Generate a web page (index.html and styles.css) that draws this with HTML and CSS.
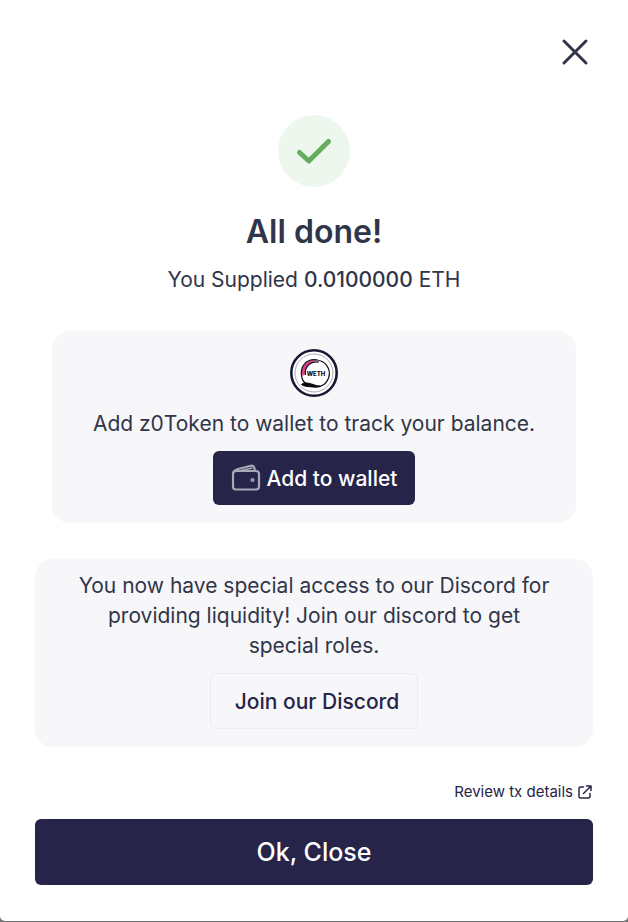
FILE: index.html
```html
<!DOCTYPE html>
<html lang="en">
<head>
<meta charset="utf-8">
<meta name="viewport" content="width=device-width, initial-scale=1">
<title>All done!</title>
<link rel="stylesheet" href="styles.css">
</head>
<body>
<main class="modal">
  <button class="close" type="button" aria-label="Close">
    <svg width="36" height="36" viewBox="0 0 36 36" fill="none" stroke="currentColor" stroke-width="3" stroke-linecap="round"><path d="M7 7L29 29M29 7L7 29"/></svg>
  </button>
  <div class="status">
    <svg width="48" height="48" viewBox="0 0 48 48" fill="none" stroke="currentColor" stroke-width="5" stroke-linecap="round" stroke-linejoin="round"><path d="M9.500 25.500L18.800 34L38.500 14.500"/></svg>
  </div>
  <h1 class="title">All done!</h1>
  <p class="summary">You Supplied <strong>0.0100000</strong> ETH</p>

  <section class="card token-card">
    <svg class="token" width="48" height="48" viewBox="0 0 48 48" role="img" aria-label="WETH">
      <circle cx="24" cy="24" r="22.700" fill="#fff" stroke="#1b1835" stroke-width="2.600"/>
      <circle cx="24" cy="24" r="19" fill="none" stroke="#aaa9b8" stroke-width="1"/>
      <path d="M12.500 27C10 18 16 10 28 11C20 13 15.500 18 15.500 25Z" fill="#e43f86"/>
      <path d="M26 11A13.500 13.500 0 1 1 18 35.500M28 11C16 9 9 18 12 29C13 33 16 35 19 36M29 13C20 12 14 18 15.500 26" fill="none" stroke="#100e1b" stroke-width="1.200"/>
      <path d="M11.500 35.500C14 33 19 34 23 35.500C26 36.500 28 37 30 37C25 38.500 14 38 11.500 35.500Z" fill="#08070d" stroke="#08070d"/>
      <text class="token-label" x="26" y="27" text-anchor="middle">WETH</text>
    </svg>
    <p class="text">Add z0Token to wallet to track your balance.</p>
    <button class="button wallet-button" type="button">
      <svg width="30" height="30" viewBox="0 0 30 30" fill="none" stroke="currentColor" stroke-width="2.200" stroke-linejoin="round"><rect x="2" y="8" width="26" height="18.500" rx="3"/><path d="M2.500 9.500C3.500 7 5 6.500 7 6L20 2.800Q22.500 2.300 23.200 4.500L24 8"/><path d="M10 7.500L21.500 5" stroke-width="1.500"/><circle cx="21.500" cy="17" r="1.300" stroke-width="1.500"/></svg>
      <span>Add to wallet</span>
    </button>
  </section>

  <section class="card discord-card">
    <p class="text">You now have special access to our Discord for providing liquidity! Join our discord to get special roles.</p>
    <button class="button discord-button" type="button">Join our Discord</button>
  </section>

  <a class="details" href="#">Review tx details
    <svg width="16" height="16" viewBox="0 0 16 16" fill="none" stroke="currentColor" stroke-width="1.500" stroke-linecap="round" stroke-linejoin="round"><path d="M6.500 3H3.500Q2 3 2 4.500V12.500Q2 14 3.500 14H11.500Q13 14 13 12.500V9.500M9.500 2H14V6.500M14 2L6.500 9.500"/></svg>
  </a>
  <button class="button confirm" type="button">Ok, Close</button>
</main>
</body>
</html>
```
FILE: styles.css
```css
* { box-sizing: border-box; }
body {
  margin: 0;
  background: #757575;
  color: #303549;
  font-family: Inter, "Liberation Sans", sans-serif;
}
.modal {
  display: flex;
  flex-direction: column;
  align-items: center;
  min-height: calc(100vh - 1px);
  padding: 34px 35px 36px;
  background: #fff;
  border-radius: 0 0 5px 5px;
}
button { font: inherit; cursor: pointer; }
.close {
  align-self: flex-end;
  display: flex;
  padding: 0;
  border: 0;
  background: none;
  color: #303549;
}
.status {
  display: grid;
  place-items: center;
  width: 72px;
  height: 72px;
  margin-top: 45px;
  border-radius: 50%;
  background: #edf7ee;
  color: #65ae5b;
}
.title {
  margin: 25px 0 0;
  font-size: 32px;
  font-weight: 600;
  line-height: 40px;
}
.summary, .text {
  margin: 0;
  font-size: 21px;
  line-height: 30px;
  text-align: center;
}
.summary { margin-top: 13px; }
.summary strong { font-weight: 500; }
.card {
  display: flex;
  flex-direction: column;
  align-items: center;
  padding: 18px;
  border-radius: 18px;
  background: #f7f7f9;
}
.token-card {
  align-self: stretch;
  margin: 36px 17px 0;
}
.token-label { font: 800 6px Inter, sans-serif; fill: #08070d; }
.token-card .text { margin: 12px 0; }
.button {
  display: flex;
  align-items: center;
  justify-content: center;
  border: 0;
  border-radius: 6px;
  font-size: 21px;
  font-weight: 500;
}
.wallet-button {
  gap: 6px;
  height: 54px;
  padding: 0 18px;
  background: #27244a;
  color: #fff;
}
.wallet-button svg { color: #a9a8b7; }
.discord-card {
  align-self: stretch;
  margin-top: 36px;
  padding: 12px 36px 18px;
}
.discord-button {
  height: 56px;
  margin-top: 12px;
  padding: 0 18px 0 24px;
  border: 1px solid #eaebef;
  background: transparent;
  color: #27244a;
}
.details {
  display: flex;
  align-items: center;
  gap: 4px;
  align-self: flex-end;
  margin-top: 33px;
  color: #27244a;
  font-size: 15px;
  line-height: 24px;
  text-decoration: none;
}
.confirm {
  align-self: stretch;
  height: 66px;
  margin-top: 15px;
  background: #27244a;
  color: #fff;
  font-size: 25px;
}
```
